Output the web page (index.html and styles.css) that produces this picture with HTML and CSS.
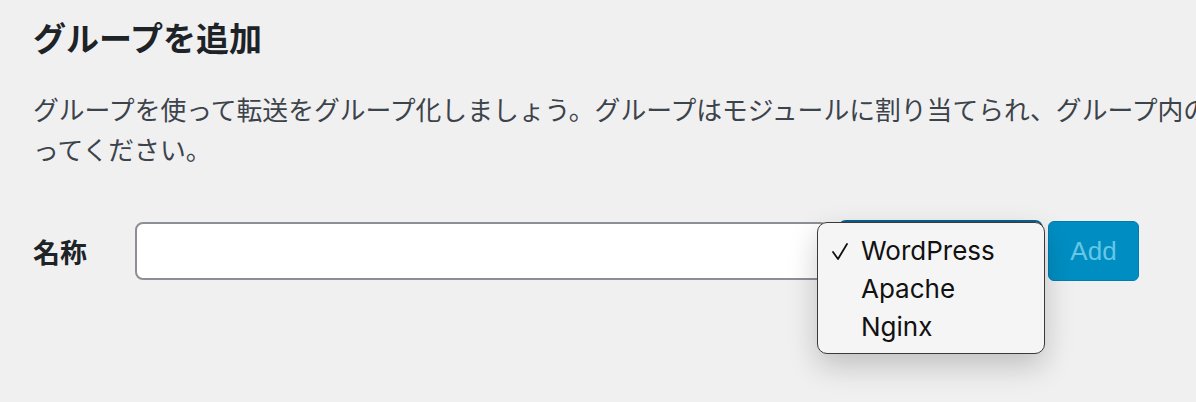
FILE: index.html
```html
<!DOCTYPE html>
<html lang="ja">
<head>
    <meta charset="UTF-8">
    <title>グループを追加</title>
    <link rel="stylesheet" href="styles.css">
</head>
<body>

<div class="wrap">
    <h2 class="title">グループを追加</h2>
    <p class="desc">グループを使って転送をグループ化しましょう。グループはモジュールに割り当てられ、グループ内の転送に影響を与えます。よくわからない場合は WordPress モジュールを使<br>ってください。</p>

    <div class="form-row">
        <label class="label" for="group-name">名称</label>
        <input class="name-input" type="text" id="group-name">
        <div class="select-wrap">
            <div class="select-box"></div>
            <!-- open native menu -->
            <ul class="menu">
                <li class="menu-item selected">
                    <svg class="check" width="18" height="20" viewBox="0 0 18 20"><polyline points="2,10 7,17 16,2" fill="none" stroke="#111" stroke-width="1.8" stroke-linecap="round" stroke-linejoin="round"/></svg>
                    WordPress
                </li>
                <li class="menu-item">Apache</li>
                <li class="menu-item">Nginx</li>
            </ul>
        </div>
        <button class="add-btn" disabled>Add</button>
    </div>
</div>

</body>
</html>
```

FILE: styles.css
```css
html, body {
    margin: 0;
    height: 100%;
    overflow: hidden;
}
body {
    background-color: #f0f0f1;
    font-family: "Noto Sans CJK JP", sans-serif;
    color: #3c434a;
}
.wrap {
    padding: 16px 0 0 33px;
}
.title {
    margin: 0;
    font-size: 33px;
    line-height: 43px;
    font-weight: bold;
    color: #1d2327;
}
.desc {
    margin: 30px 0 0;
    font-size: 25.8px;
    line-height: 40px;
    white-space: nowrap;
    color: #3c434a;
}
.form-row {
    display: flex;
    align-items: center;
    margin-top: 51px;
    height: 62px;
}
.label {
    width: 102px;
    font-size: 27px;
    font-weight: bold;
    color: #1d2327;
}
.name-input {
    box-sizing: border-box;
    width: 693px;
    height: 58px;
    margin: 0;
    background: #fff;
    border: 2px solid #8c8f94;
    border-radius: 8px;
}
.select-wrap {
    position: relative;
    margin-left: 10px;
    width: 205px;
    height: 62px;
}
.select-box {
    box-sizing: border-box;
    height: 62px;
    background: #fff;
    border: 2px solid #0a5f90;
    border-radius: 8px;
}
.menu {
    position: absolute;
    left: -21px;
    top: 2px;
    box-sizing: border-box;
    width: 228px;
    margin: 0;
    padding: 9px 0 7px;
    list-style: none;
    background: #f5f5f5;
    border: 1.5px solid #3a3a3a;
    border-radius: 10px;
    box-shadow: 0 12px 30px rgba(0, 0, 0, 0.2);
    font-family: Inter, sans-serif;
    font-size: 26px;
    color: #111;
}
.menu-item {
    position: relative;
    height: 38px;
    line-height: 38px;
    padding-left: 43px;
}
.check {
    position: absolute;
    left: 13px;
    top: 10px;
}
.add-btn {
    margin-left: 5px;
    width: 91px;
    height: 60px;
    padding: 0;
    background: #008ec2;
    border: 1px solid #007cb2;
    border-radius: 6px;
    color: #66c6e4;
    font-family: "Liberation Sans", Arial, sans-serif;
    font-size: 26px;
}
```
